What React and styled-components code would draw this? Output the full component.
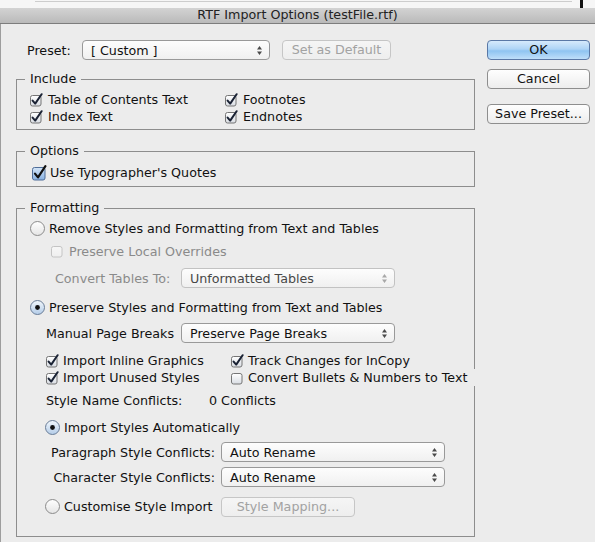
import React, { useId } from "react";
import styled, { createGlobalStyle } from "styled-components";

const GlobalStyle = createGlobalStyle`
  html, body { margin: 0; padding: 0; background: #ececec; }
  body {
    font-family: "DejaVu Sans", "Liberation Sans", sans-serif;
    font-size: 12.7px;
    color: #111;
  }
  * { box-sizing: border-box; }
`;

const Window = styled.div`
  width: 595px;
  height: 542px;
  overflow: hidden;
  background: #ececec;
  display: flex;
  flex-direction: column;
`;

const TopStrip = styled.div`
  height: 8px;
  background: #f6f6f6;
  display: flex;
  align-items: flex-start;
  padding-left: 35px;
`;

const StripLine = styled.div`
  width: 537px;
  height: 1px;
  margin-top: 1px;
  background: #cdcdcd;
`;

const CursorMark = styled.div`
  width: 3px;
  height: 8px;
  margin-left: 8px;
  background: #111;
`;

const TitleBar = styled.div`
  height: 16px;
  line-height: 13px;
  text-align: center;
  color: #222;
  background: linear-gradient(#d3d3d3, #bababa);
  border-bottom: 1px solid #7d7d7d;
`;

const Body = styled.div`
  flex: 1;
  display: flex;
  padding: 16px 0 0 15px;
  border-left: 1px solid #9d9d9d;
`;

const Main = styled.div`
  width: 459px;
  display: flex;
  flex-direction: column;
`;

const Side = styled.div`
  width: 103px;
  margin-left: 12px;
  display: flex;
  flex-direction: column;
`;

const Row = styled.div`
  display: flex;
  align-items: center;
  flex-shrink: 0;
  height: ${(p) => p.$h || 17}px;
  margin-top: ${(p) => p.$mt || 0}px;
  padding-left: ${(p) => p.$indent || 0}px;
`;

const Label = styled.span`
  flex-shrink: 0;
  width: ${(p) => (p.$w ? `${p.$w}px` : "auto")};
  text-align: ${(p) => (p.$right ? "right" : "left")};
  color: ${(p) => (p.$disabled ? "#8a8a8a" : "inherit")};
  white-space: nowrap;
`;

const Group = styled.fieldset`
  margin: ${(p) => p.$mt}px 0 0;
  padding: ${(p) => p.$pt}px 0 ${(p) => p.$pb}px;
  border: 1px solid #8d8d8d;
  min-width: 0;
`;

const Legend = styled.legend`
  margin-left: 8px;
  padding: 0 5px;
  line-height: 16px;
`;

const Item = styled.label`
  display: flex;
  align-items: center;
  flex-shrink: 0;
  gap: ${(p) => (p.$gap !== undefined ? p.$gap : 5)}px;
  width: ${(p) => (p.$w ? `${p.$w}px` : "auto")};
  height: 100%;
  white-space: nowrap;
  color: ${(p) => (p.$disabled ? "#8a8a8a" : "inherit")};
  background: ${(p) => (p.$cover ? "#ececec" : "transparent")};
`;

const SelectBox = styled.div`
  flex-shrink: 0;
  display: flex;
  align-items: center;
  justify-content: space-between;
  width: ${(p) => p.$w}px;
  height: 20px;
  padding: 0 6px 0 8px;
  border: 1px solid ${(p) => (p.$disabled ? "#c2c2c2" : "#999")};
  border-radius: 4px;
  background: linear-gradient(#fdfdfd, #f0f0f0);
  color: ${(p) => (p.$disabled ? "#474747" : "#111")};
  white-space: nowrap;
`;

const Button = styled.div`
  flex-shrink: 0;
  width: ${(p) => (p.$w ? `${p.$w}px` : "100%")};
  height: 20px;
  margin-top: ${(p) => p.$mt || 0}px;
  margin-left: ${(p) => p.$ml || 0}px;
  line-height: 18px;
  text-align: center;
  border-radius: 4px;
  white-space: nowrap;
  border: 1px solid
    ${(p) => (p.$primary ? "#5a78a6" : p.$disabled ? "#c6c6c6" : "#8e8e8e")};
  color: ${(p) => (p.$disabled ? "#a2a2a2" : "#111")};
  background: ${(p) =>
    p.$primary
      ? "linear-gradient(#d6eafc 0%, #aed4f6 45%, #8fc4f1 55%, #bfdffa 100%)"
      : p.$disabled
      ? "linear-gradient(#f5f5f5, #eeeeee)"
      : "linear-gradient(#fefefe, #ededed)"};
`;

const cleanId = (id) => "g" + id.replace(/[^a-zA-Z0-9]/g, "");

const CheckBox = ({ checked, disabled }) => {
  const id = cleanId(useId());
  return (
    <svg width="13" height="14" viewBox="0 0 13 14">
      <defs>
        <linearGradient id={id} x1="0" y1="0" x2="0" y2="1">
          <stop offset="0" stopColor={disabled ? "#f7f7f7" : "#ffffff"} />
          <stop offset="1" stopColor={disabled ? "#efefef" : "#d9dde3"} />
        </linearGradient>
      </defs>
      <rect
        x="0.5"
        y="2.5"
        width="10.5"
        height="10.5"
        rx="2"
        fill={`url(#${id})`}
        stroke={disabled ? "#c4c4c4" : "#757575"}
      />
      {checked && (
        <path
          d="M2.6 7.6 L5.2 10.6 L11.6 1.2"
          fill="none"
          stroke="#1a2234"
          strokeWidth="2"
          strokeLinecap="round"
          strokeLinejoin="round"
        />
      )}
    </svg>
  );
};

const FocusCheckBox = () => {
  const id = cleanId(useId());
  return (
    <svg width="15" height="16" viewBox="0 0 15 16">
      <defs>
        <linearGradient id={id} x1="0" y1="0" x2="0" y2="1">
          <stop offset="0" stopColor="#d4e5f7" />
          <stop offset="1" stopColor="#88b1e2" />
        </linearGradient>
      </defs>
      <rect x="0.5" y="2.5" width="12.5" height="12.5" rx="2" fill={`url(#${id})`} stroke="#4f6d98" />
      <path
        d="M3 8.6 L6 12.4 L13.4 1.2"
        fill="none"
        stroke="#111"
        strokeWidth="2.2"
        strokeLinecap="round"
        strokeLinejoin="round"
      />
    </svg>
  );
};

const Radio = ({ on }) => {
  const id = cleanId(useId());
  return (
    <svg width="15" height="15" viewBox="0 0 15 15">
      <defs>
        <linearGradient id={id} x1="0" y1="0" x2="0" y2="1">
          <stop offset="0" stopColor={on ? "#f3f8fd" : "#ffffff"} />
          <stop offset="1" stopColor={on ? "#b2cbe7" : "#e4e4e4"} />
        </linearGradient>
      </defs>
      <circle cx="7.5" cy="7.5" r="7" fill={`url(#${id})`} stroke={on ? "#6a7d97" : "#8a8a8a"} />
      {on && <circle cx="7.5" cy="7.5" r="2.4" fill="#111" />}
    </svg>
  );
};

const Arrows = ({ disabled }) => (
  <svg width="7" height="11" viewBox="0 0 7 11">
    <path d="M3.5 1 L6 4.5 L1 4.5 Z M1 6.5 L6 6.5 L3.5 10 Z" fill={disabled ? "#a8a8a8" : "#4a4a4a"} />
  </svg>
);

const Select = ({ w, disabled, children }) => (
  <SelectBox $w={w} $disabled={disabled}>
    <span>{children}</span>
    <Arrows disabled={disabled} />
  </SelectBox>
);

export default function App() {
  return (
    <>
      <GlobalStyle />
      <Window>
        <TopStrip>
          <StripLine />
          <CursorMark />
        </TopStrip>
        <TitleBar>RTF Import Options (testFile.rtf)</TitleBar>
        <Body>
          <Main>
            <Row $h={20} $indent={11}>
              <Label $w={55}>Preset:</Label>
              <Select w={188}>[ Custom ]</Select>
              <Button $w={109} $ml={12} $disabled>
                Set as Default
              </Button>
            </Row>

            <Group $mt={11} $pt={4} $pb={4}>
              <Legend>Include</Legend>
              <Row $indent={13}>
                <Item $w={195}>
                  <CheckBox checked />
                  Table of Contents Text
                </Item>
                <Item>
                  <CheckBox checked />
                  Footnotes
                </Item>
              </Row>
              <Row $indent={13}>
                <Item $w={195}>
                  <CheckBox checked />
                  Index Text
                </Item>
                <Item>
                  <CheckBox checked />
                  Endnotes
                </Item>
              </Row>
            </Group>

            <Group $mt={13} $pt={5} $pb={5}>
              <Legend>Options</Legend>
              <Row $indent={15}>
                <Item $gap={3}>
                  <FocusCheckBox />
                  Use Typographer's Quotes
                </Item>
              </Row>
            </Group>

            <Group $mt={13} $pt={0} $pb={19}>
              <Legend>Formatting</Legend>
              <Row $h={18} $mt={3} $indent={13}>
                <Item $gap={4}>
                  <Radio />
                  Remove Styles and Formatting from Text and Tables
                </Item>
              </Row>
              <Row $h={14} $mt={7} $indent={34}>
                <Item $disabled>
                  <CheckBox disabled />
                  Preserve Local Overrides
                </Item>
              </Row>
              <Row $h={20} $mt={10} $indent={38}>
                <Label $w={126} $disabled>
                  Convert Tables To:
                </Label>
                <Select w={214} disabled>
                  Unformatted Tables
                </Select>
              </Row>
              <Row $h={18} $mt={10} $indent={13}>
                <Item $gap={4}>
                  <Radio on />
                  Preserve Styles and Formatting from Text and Tables
                </Item>
              </Row>
              <Row $h={20} $mt={7} $indent={29}>
                <Label $w={135}>Manual Page Breaks</Label>
                <Select w={214}>Preserve Page Breaks</Select>
              </Row>
              <Row $mt={9} $indent={29}>
                <Item $w={185} $gap={4}>
                  <CheckBox checked />
                  Import Inline Graphics
                </Item>
                <Item $gap={4}>
                  <CheckBox checked />
                  Track Changes for InCopy
                </Item>
              </Row>
              <Row $indent={29}>
                <Item $w={185} $gap={4}>
                  <CheckBox checked />
                  Import Unused Styles
                </Item>
                <Item $w={250} $gap={4} $cover>
                  <CheckBox />
                  Convert Bullets &amp; Numbers to Text
                </Item>
              </Row>
              <Row $mt={6} $indent={29}>
                <Label $w={163}>Style Name Conflicts:</Label>
                <Label>0 Conflicts</Label>
              </Row>
              <Row $h={18} $mt={9} $indent={28}>
                <Item $gap={4}>
                  <Radio on />
                  Import Styles Automatically
                </Item>
              </Row>
              <Row $h={20} $mt={6} $indent={28}>
                <Label $w={170} $right>
                  Paragraph Style Conflicts:
                </Label>
                <Row $h={20} $indent={6}>
                  <Select w={224}>Auto Rename</Select>
                </Row>
              </Row>
              <Row $h={20} $mt={5} $indent={28}>
                <Label $w={170} $right>
                  Character Style Conflicts:
                </Label>
                <Row $h={20} $indent={6}>
                  <Select w={224}>Auto Rename</Select>
                </Row>
              </Row>
              <Row $h={21} $mt={9} $indent={28}>
                <Item $w={176} $gap={4}>
                  <Radio />
                  Customise Style Import
                </Item>
                <Button $w={134} $disabled>
                  Style Mapping...
                </Button>
              </Row>
            </Group>
          </Main>

          <Side>
            <Button $primary>OK</Button>
            <Button $mt={9}>Cancel</Button>
            <Button $mt={15}>Save Preset...</Button>
          </Side>
        </Body>
      </Window>
    </>
  );
}
